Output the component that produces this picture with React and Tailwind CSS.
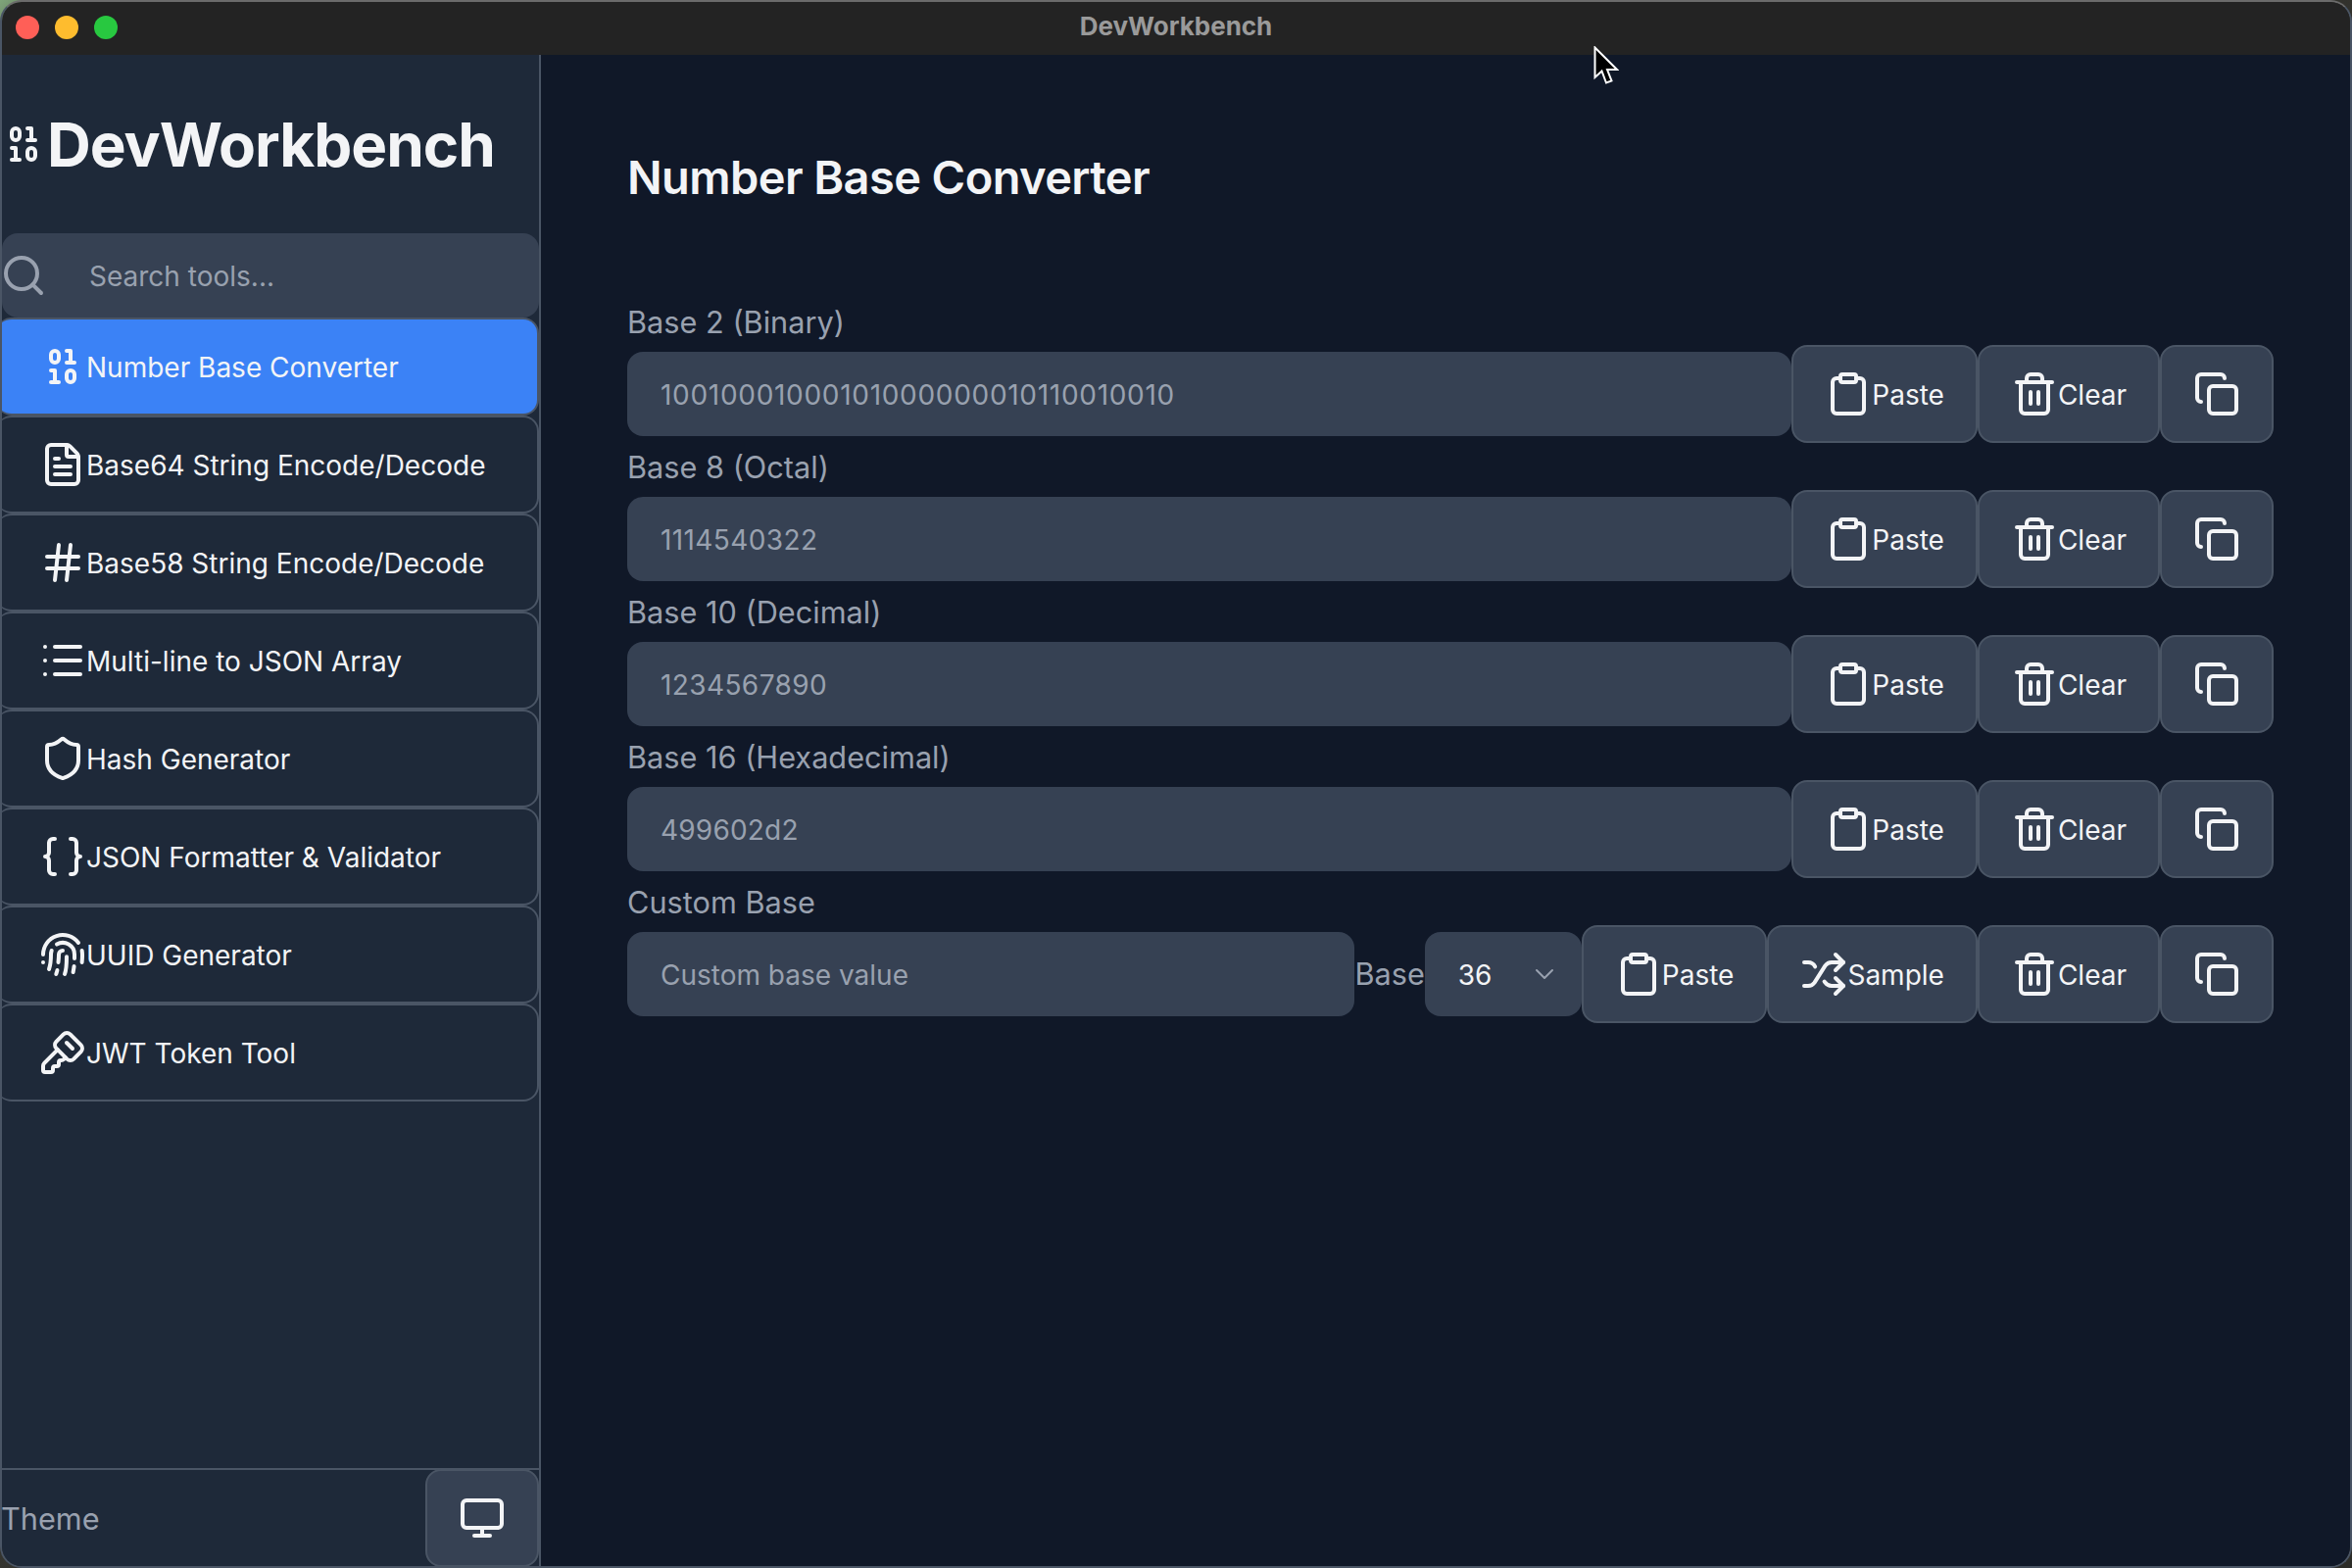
import {
  Binary, FileText, Hash, List, Shield, Braces, Fingerprint, KeySquare,
  Search, Clipboard, Trash2, Copy, Shuffle, ChevronDown, Monitor,
} from 'lucide-react';

const tools = [
  { name: 'Number Base Converter', icon: Binary, active: true },
  { name: 'Base64 String Encode/Decode', icon: FileText },
  { name: 'Base58 String Encode/Decode', icon: Hash },
  { name: 'Multi-line to JSON Array', icon: List },
  { name: 'Hash Generator', icon: Shield },
  { name: 'JSON Formatter & Validator', icon: Braces },
  { name: 'UUID Generator', icon: Fingerprint },
  { name: 'JWT Token Tool', icon: KeySquare },
];

const fields = [
  { label: 'Base 2 (Binary)', value: '10010001000101000000010110010010', spacing: 'tracking-[0.7px]' },
  { label: 'Base 8 (Octal)', value: '1114540322', spacing: 'tracking-[0.4px]' },
  { label: 'Base 10 (Decimal)', value: '1234567890', spacing: 'tracking-[0.4px]' },
  { label: 'Base 16 (Hexadecimal)', value: '499602d2', spacing: 'tracking-[0.2px]' },
];

function ActionButton({ icon: Icon, label }) {
  return (
    <button className="flex h-[100px] shrink-0 items-center rounded-2xl border-2 border-[#4a5565] bg-[#364153] px-8 text-[28px] text-[#f3f4f6]">
      <Icon size={48} />
      {label && <span className="pt-0.5">{label}</span>}
    </button>
  );
}

function Field({ label, value, spacing }) {
  return (
    <div>
      <label className="block h-12 pt-px text-[30.7px] leading-[48px] text-[#99a1af]">{label}</label>
      <div className="flex h-[100px] items-center">
        <input
          readOnly
          value={value}
          className={`h-[86px] min-w-0 flex-1 rounded-2xl bg-[#364153] px-[34px] pt-0.5 text-[28px] text-[#99a1af] outline-none ${spacing}`}
        />
        <ActionButton icon={Clipboard} label="Paste" />
        <ActionButton icon={Trash2} label="Clear" />
        <ActionButton icon={Copy} />
      </div>
    </div>
  );
}

export default function App() {
  return (
    <div className="relative h-[1600px] w-[2400px] overflow-hidden bg-[linear-gradient(135deg,#7fa57a_0%,#3a3a34_3%,#2c2c28_100%)] font-[family-name:Inter,sans-serif]">
      <div className="flex h-full flex-col overflow-hidden rounded-[22px] border-2 border-[#4a5565] border-t-[#6b6b6b]">
        <div className="grid h-[54px] shrink-0 grid-cols-3 items-center bg-[#232323]">
          <div className="flex gap-4 pb-0.5 pl-[14px]">
            <span className="h-6 w-6 rounded-full bg-[#ff5f57]" />
            <span className="h-6 w-6 rounded-full bg-[#febc2e]" />
            <span className="h-6 w-6 rounded-full bg-[#28c840]" />
          </div>
          <div className="pb-[5px] text-center text-[26px] font-bold text-[#9a9a9a]">DevWorkbench</div>
        </div>

        <div className="flex min-h-0 flex-1">
          <aside className="flex w-[550px] shrink-0 flex-col overflow-hidden border-r-2 border-[#4a5565] bg-[#1e2939]">
            <div className="flex h-[182px] shrink-0 items-center text-[#f3f4f6]">
              <Binary size={48} className="-ml-0.5 shrink-0" />
              <h1 className="pt-0.5 text-[62px] font-bold leading-none tracking-[-1px]">DevWorkbench</h1>
            </div>

            <div className="flex h-[86px] shrink-0 items-center rounded-2xl bg-[#364153] text-[#99a1af]">
              <Search size={48} className="-ml-0.5 shrink-0" />
              <span className="pl-[43px] pt-0.5 text-[28px]">Search tools...</span>
            </div>

            <nav className="flex flex-col">
              {tools.map((tool) => (
                <button
                  key={tool.name}
                  className={`-ml-1.5 flex h-[100px] items-center rounded-2xl border-2 border-l-0 border-[#4a5565] pl-[44px] text-[28px] text-[#f3f4f6] ${tool.active ? 'bg-[#3b82f6]' : ''}`}
                >
                  <tool.icon size={48} className="shrink-0" />
                  <span className="pt-0.5">{tool.name}</span>
                </button>
              ))}
            </nav>

            <div className="mt-auto flex h-[100px] items-center justify-between border-t-2 border-[#4a5565]">
              <span className="-ml-px pt-0.5 text-[30.7px] text-[#99a1af]">Theme</span>
              <button className="flex h-[100px] w-[116px] items-center justify-center rounded-2xl border-2 border-[#4a5565] bg-[#364153] text-[#f3f4f6]">
                <Monitor size={48} />
              </button>
            </div>
          </aside>

          <main className="min-w-0 flex-1 bg-[#101828] pl-[88px] pr-[78px]">
            <h2 className="pb-[91px] pt-[93px] text-[47px] font-semibold leading-[64px] tracking-[-0.6px] text-[#f3f4f6]">
              Number Base Converter
            </h2>
            <div>
              {fields.map((field) => (
                <Field key={field.label} label={field.label} value={field.value} spacing={field.spacing} />
              ))}
              <div>
                <label className="block h-12 pt-px text-[30.7px] leading-[48px] text-[#99a1af]">Custom Base</label>
                <div className="flex h-[100px] items-center">
                  <input
                    readOnly
                    placeholder="Custom base value"
                    className="h-[86px] min-w-0 flex-1 rounded-2xl bg-[#364153] px-[34px] pt-0.5 text-[28px] text-[#99a1af] outline-none placeholder:text-[#99a1af]"
                  />
                  <span className="text-[30.7px] text-[#99a1af]">Base</span>
                  <div className="flex h-[86px] w-[160px] shrink-0 items-center justify-between rounded-2xl bg-[#364153] pl-[34px] pr-[22px] text-[28px] text-[#f3f4f6]">
                    <span className="pt-0.5">36</span>
                    <ChevronDown size={32} strokeWidth={1.5} className="text-[#99a1af]" />
                  </div>
                  <ActionButton icon={Clipboard} label="Paste" />
                  <ActionButton icon={Shuffle} label="Sample" />
                  <ActionButton icon={Trash2} label="Clear" />
                  <ActionButton icon={Copy} />
                </div>
              </div>
            </div>
          </main>
        </div>
      </div>

      {/* mouse pointer caught in the screenshot */}
      <svg className="absolute left-[1626px] top-[47px]" width="26" height="40" viewBox="0 0 26 40">
        <path d="M1.5 1.5 L1.5 32 L8.5 25.5 L13 37.5 L18.5 35.5 L14 24 L24 24 Z" fill="#000" stroke="#fff" strokeWidth="2" />
      </svg>
    </div>
  );
}
